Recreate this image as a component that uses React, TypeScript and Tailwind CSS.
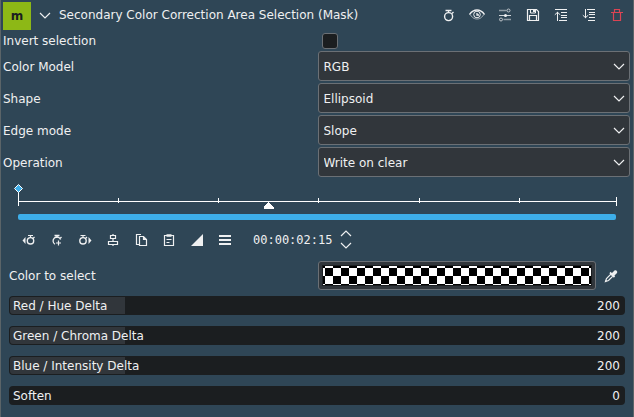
import { useState, type ReactNode } from "react";

function Icon({ children, className = "" }: { children: ReactNode; className?: string }) {
  return (
    <svg viewBox="0 0 16 16" className={`size-4 shrink-0 ${className}`} fill="none" stroke="currentColor" aria-hidden="true">
      {children}
    </svg>
  );
}

function ToolButton({ label, className = "", children }: { label: string; className?: string; children: ReactNode }) {
  return (
    <button type="button" aria-label={label} className={`flex h-7 w-7 shrink-0 items-center justify-center ${className}`}>
      <Icon>{children}</Icon>
    </button>
  );
}

function Chevron({ up = false }: { up?: boolean }) {
  return (
    <svg viewBox="0 0 12 7" className="h-[7px] w-3" fill="none" stroke="currentColor" aria-hidden="true">
      <path d={up ? "M1 6 6 1l5 5" : "M1 1l5 5 5-5"} strokeWidth="1.2" />
    </svg>
  );
}

function SelectRow({ id, label, options }: { id: string; label: string; options: string[] }) {
  return (
    <div className="grid grid-cols-2 items-center gap-0.5">
      <label htmlFor={id} className="pt-0.5">{label}</label>
      <div className="relative">
        <select
          id={id}
          className="block h-[30px] w-full appearance-none rounded-[3px] border border-[#6b7075] bg-[#31363b] px-[5px] pt-0.5 outline-none"
        >
          {options.map((o) => (
            <option key={o}>{o}</option>
          ))}
        </select>
        <span className="pointer-events-none absolute inset-y-0 right-[5px] flex items-center">
          <Chevron />
        </span>
      </div>
    </div>
  );
}

function DeltaSlider({ id, label, initial }: { id: string; label: string; initial: number }) {
  const [value, setValue] = useState(initial);
  const max = 1070;
  return (
    <div className="relative h-[19px]">
      <input
        id={id}
        type="range"
        min={0}
        max={max}
        value={value}
        onChange={(e) => setValue(Number(e.target.value))}
        className="block h-full w-full appearance-none rounded-[4px] bg-[#1b1e20] outline-none [&::-webkit-slider-thumb]:opacity-0"
      />
      <div className="pointer-events-none absolute inset-px overflow-hidden rounded-[3px]">
        <div className="h-full bg-[#31363b]" style={{ width: `${(value / max) * 100}%` }} />
      </div>
      <div className="pointer-events-none absolute inset-0 flex items-center justify-between pr-[5px] pl-1">
        <label htmlFor={id}>{label}</label>
        <output htmlFor={id}>{value}</output>
      </div>
    </div>
  );
}

const ticks = ["16.8%", "33.5%", "50.2%", "67.1%", "83.8%"];

function KeyframeRuler() {
  return (
    <div className="mr-[14px] ml-[15px] pt-[5px]">
      <svg className="block h-[32px] w-full overflow-visible text-white" stroke="currentColor" role="img" aria-label="Keyframe timeline" shapeRendering="crispEdges">
        <line x1="0" x2="100%" y1="19.5" y2="19.5" />
        <line x1="0.5" x2="0.5" y1="6" y2="24" />
        <line x1="100%" x2="100%" y1="15" y2="24" />
        {ticks.map((x) => (
          <line key={x} x1={x} x2={x} y1="16" y2="21" />
        ))}
        <path d="M.5 2.5l4 4-4 4-4-4z" fill="#3daee9" shapeRendering="auto" />
        <svg x="41.9%" y="20" className="overflow-visible">
          <path d="M0 0l5 5v2H-5V5z" fill="currentColor" stroke="none" />
        </svg>
      </svg>
      <div className="h-1.5 rounded-[2px] bg-[#3daee9]" />
    </div>
  );
}

export default function App() {
  return (
    <main className="min-h-screen border-x border-[#5b6468] bg-[#2f4656] px-0.5 pt-0.5 font-['DejaVu_Sans',sans-serif] text-[12px] leading-[18px] text-[#eff0f1]">
      <header className="flex h-7 items-center">
        <div className="flex size-7 shrink-0 items-center justify-center bg-[#8db816] font-bold text-[#1b1e20]">m</div>
        <button type="button" aria-label="Collapse effect" className="flex h-7 w-7 shrink-0 items-center justify-center pb-0.5">
          <Chevron />
        </button>
        <h1 className="whitespace-nowrap pb-0.5">Secondary Color Correction Area Selection (Mask)</h1>
        <div className="ml-auto flex h-7 items-center pb-0.5">
          <ToolButton label="Keyframes">
            <circle cx="7.6" cy="9.6" r="4" strokeWidth="1.4" />
            <path d="M4.500 3.500h6M7.500 4v2M11 6.500l1.500-1.500" strokeWidth="1.300" />
          </ToolButton>
          <ToolButton label="Toggle effect">
            <path d="M.5 7.500C3 4 5.500 3 8 3s5 1 7.500 4.500" strokeWidth="1.500" />
            <path d="M1.500 8C4 11.600 6 12 8 12s4-.4 6.500-4" opacity=".6" />
            <circle cx="8" cy="7.500" r="3.300" />
            <path d="M8 6v2h2" strokeWidth="1.300" />
          </ToolButton>
          <ToolButton label="Presets">
            <path d="M2 3.500h7.500M6.500 12.500H14" opacity=".5" strokeWidth="1.400" />
            <path d="M2 8.500h12" opacity=".85" />
            <circle cx="11.500" cy="3.500" r="1.500" opacity=".7" />
            <circle cx="8.500" cy="8.500" r="1.500" fill="currentColor" stroke="none" />
            <circle cx="4" cy="12.500" r="1.500" opacity=".7" />
          </ToolButton>
          <ToolButton label="Save effect">
            <path d="M2.500 2.500h9l2 2v9h-11zM4.500 13V8.500h7V13" strokeWidth="1.200" />
            <path d="M5.500 2v4h5V2" />
            <path d="M9 2.500V5" strokeWidth="2" />
          </ToolButton>
          <ToolButton label="Move up">
            <path d="M2 2.500h12M8 5.500h6M8 8.500h6M8 10.500h6M6 13.500h8" />
            <path d="M4.500 14V5M1.800 7.800l2.700-2.500L7.200 7.800" />
          </ToolButton>
          <ToolButton label="Move down">
            <path d="M6 2.500h8M8 5.500h6M8 7.500h6M8 10.500h6M7 13.500h7" />
            <path d="M4.500 2v9M1.800 8.200 4.500 10.700 7.200 8.200" />
          </ToolButton>
          <ToolButton label="Delete effect" className="text-[#da4453]">
            <path d="M2 5.500h12M5.500 5V2.500h5V5M4.500 5.500v8h7v-8" strokeWidth="1.200" />
          </ToolButton>
        </div>
      </header>

      <div className="pr-px">
        <div className="grid h-[21px] grid-cols-2 items-center gap-0.5">
          <label htmlFor="invert">Invert selection</label>
          <input
            id="invert"
            type="checkbox"
            className="ml-1 size-4 appearance-none rounded-[3px] border border-[#6b7075] bg-[#1b1e20] checked:bg-[#3daee9]"
          />
        </div>

        <div className="flex flex-col gap-0.5">
          <SelectRow id="model" label="Color Model" options={["RGB", "ABI", "HCI"]} />
          <SelectRow id="shape" label="Shape" options={["Ellipsoid", "Box", "Diamond"]} />
          <SelectRow id="edge" label="Edge mode" options={["Slope", "Hard", "Fat", "Normal", "Skinny"]} />
          <SelectRow id="operation" label="Operation" options={["Write on clear", "Max", "Min", "Add", "Subtract"]} />
        </div>

        <KeyframeRuler />

        <div className="mt-1.5 flex h-7 items-center pl-3">
          <ToolButton label="Previous keyframe">
            <path d="M4.500 5v7L1.500 8.500z" fill="currentColor" stroke="none" />
            <circle cx="9.500" cy="8.800" r="3.200" strokeWidth="1.400" />
            <path d="M7 3.500h5M9.500 4v2M12 6.500l1.500-1.500" strokeWidth="1.200" />
          </ToolButton>
          <ToolButton label="Add keyframe">
            <path d="M6 12.300A3.900 3.900 0 1 1 11.600 7.500M5.500 3.500h5M8 4v2M11 6.500l1.500-1.500" strokeWidth="1.300" />
            <path d="M9.500 8.500v5M7 11h5" strokeWidth="1.200" />
          </ToolButton>
          <ToolButton label="Next keyframe">
            <path d="M11.500 5v7l3-3.500z" fill="currentColor" stroke="none" />
            <circle cx="6" cy="8.800" r="3.200" strokeWidth="1.400" />
            <path d="M3.500 3.500h5M6 4v2M8.500 6.500l1.500-1.500" strokeWidth="1.200" />
          </ToolButton>
          <ToolButton label="Align keyframe">
            <path d="M5.500 3.500h5v3h-5zM3.500 9.500h9v3h-9zM8 2v1.500M8 6.500v3M8 12.500V14" strokeWidth="1.200" />
          </ToolButton>
          <ToolButton label="Copy keyframes">
            <path d="M6 12.500H3.500v-10H8M6.500 4.500h4l3 3v6h-7zM10.500 4.500v3h3" strokeWidth="1.200" />
          </ToolButton>
          <ToolButton label="Paste keyframes">
            <path d="M3.500 3.500h9v10h-9zM5.500 7.500h5M5.500 10.500h3" strokeWidth="1.200" />
            <path d="M5.500 3.500h5" strokeWidth="2.500" />
          </ToolButton>
          <ToolButton label="Interpolation">
            <path d="M14 2v12H2z" fill="currentColor" stroke="none" />
          </ToolButton>
          <ToolButton label="Keyframe options">
            <path d="M2 4h12M2 8h12M2 12h12" strokeWidth="2" />
          </ToolButton>
          <input
            aria-label="Timecode"
            defaultValue="00:00:02:15"
            className="ml-3.5 w-[82px] bg-transparent font-['DejaVu_Sans_Mono',monospace] outline-none"
          />
          <div className="ml-[5px] flex flex-col gap-[5px] pb-0.5">
            <button type="button" aria-label="Next frame">
              <Chevron up />
            </button>
            <button type="button" aria-label="Previous frame">
              <Chevron />
            </button>
          </div>
        </div>

        <div className="mt-[7px] grid grid-cols-2 items-center gap-0.5">
          <span className="pl-1.5">Color to select</span>
          <div className="flex items-center">
            <button type="button" aria-label="Color to select" className="h-[29px] flex-1 rounded-[3px] border border-[#6b7075] bg-[#31363b] p-[3px]">
              <span className="block h-full border border-[#1b1e20] bg-[conic-gradient(#fff_25%,#000_0_50%,#fff_0_75%,#000_0)] bg-size-[16px_16px] bg-position-[2px_2px]" />
            </button>
            <button type="button" aria-label="Pick color" className="flex w-[34px] items-center justify-center pr-1">
              <Icon>
                <path d="M2.500 13.500l1-3L8 6l2 2-4.500 4.500z" strokeWidth="1.200" />
                <path d="M7 4.500l4.500 4.500" strokeWidth="1.800" />
                <path d="M8.500 5.500l3-3c1.500-1 3.500.8 2.500 2.500l-3 3z" fill="currentColor" stroke="none" />
              </Icon>
            </button>
          </div>
        </div>

        <div className="mt-1.5 flex flex-col gap-[11px] pr-[5px] pl-1.5">
          <DeltaSlider id="red" label="Red / Hue Delta" initial={200} />
          <DeltaSlider id="green" label="Green / Chroma Delta" initial={200} />
          <DeltaSlider id="blue" label="Blue / Intensity Delta" initial={200} />
          <DeltaSlider id="soften" label="Soften" initial={0} />
        </div>
      </div>
    </main>
  );
}
